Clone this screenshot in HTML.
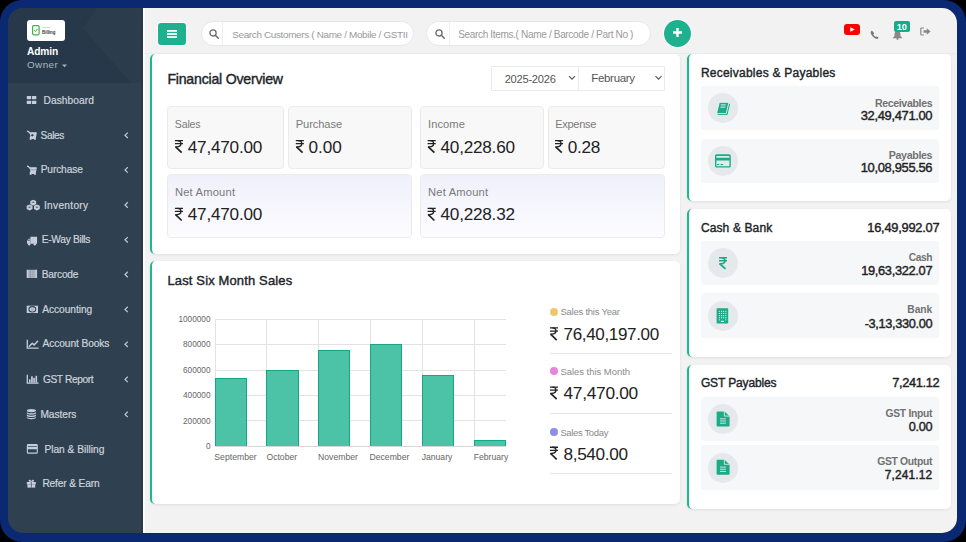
<!DOCTYPE html>
<html><head><meta charset="utf-8">
<style>
*{box-sizing:border-box;margin:0;padding:0}
html,body{width:966px;height:542px;overflow:hidden;background:#000;font-family:"Liberation Sans",sans-serif}
.frame{position:absolute;left:0;top:0;width:966px;height:542px;background:#0b2872;border-radius:22px}
.inner{position:absolute;left:0;top:0;width:966px;height:542px;clip-path:inset(8px 9px 9px 8px round 15px)}
.mainbg{position:absolute;left:143px;top:0;width:823px;height:542px;background:#f2f2f2}
.a{position:absolute}
.t{position:absolute;white-space:nowrap;line-height:1}
.side{position:absolute;left:0;top:0;width:143px;height:542px;background:#2f4050}
.prof{position:absolute;left:0;top:0;width:143px;height:83px;background:#27384a;overflow:hidden}
.sep{position:absolute;left:143px;top:0;width:1.5px;height:542px;background:#fbfbfb}
.card{position:absolute;background:#fff;border-radius:5px;box-shadow:0 1px 3px rgba(0,0,0,.08);border-left:2px solid #1db891}
.box{position:absolute;background:#f8f8f8;border:1px solid #ebebeb;border-radius:4px}
.net{background:linear-gradient(#f0f0fb,#fcfcff)}
.row{position:absolute;background:#f6f7f9;border-radius:3px;left:700.6px;width:238.6px}
.ic{position:absolute;left:708px;width:30px;height:30px;border-radius:50%;background:#e6e9ec}
.ic svg{position:absolute;left:0;top:0}
.srch{position:absolute;top:20.7px;height:25.5px;background:#fff;border:1px solid #e6e6e6;border-radius:13px}
.dd{position:absolute;top:65.5px;height:25px;background:#fff;border:1px solid #ebebeb}
.grid{position:absolute;background:#e3e3e3}
.bar{position:absolute;background:#4cc3a6;border:1.5px solid #13a783;border-bottom:none}
.rup{position:absolute}
.dot{position:absolute;width:8px;height:8px;border-radius:50%}
.hr{position:absolute;left:550px;width:122px;height:1px;background:#e6e6e6}
.chev{position:absolute}
</style></head><body>
<div class="frame"></div>
<div class="inner">
  <!-- sidebar -->
  <div class="mainbg"></div>
  <div class="side"></div>
  <div class="prof">
    <svg class="a" style="left:0;top:0" width="143" height="83"><polygon points="97,8 143,8 143,83 131,83 82.7,28.6" fill="#2b3c4d"/></svg>
  </div>
  <div class="sep"></div>
  <div class="a" style="left:141.3px;top:0;width:1.7px;height:542px;background:#283848"></div>
  <!-- logo -->
  <div class="a" style="left:27px;top:20px;width:38px;height:21px;background:#fff;border-radius:3px"></div>
  <svg class="a" style="left:32px;top:25px" width="30" height="11" viewBox="0 0 30 11">
    <rect x="0.6" y="0.6" width="6.5" height="9.2" rx="1.2" fill="none" stroke="#3bb34a" stroke-width="1.2"/>
    <path d="M2.2 5.2 L3.5 6.6 L5.6 3.8" fill="none" stroke="#3bb34a" stroke-width="1"/>
    <rect x="10.5" y="2.2" width="8" height="0.7" fill="#c8c8c8"/>
    <text x="10" y="8.6" font-family="Liberation Sans" font-size="4.9" font-weight="700" fill="#3a3a3a" textLength="13.5" lengthAdjust="spacingAndGlyphs">Billing</text>
  </svg>
  <svg class="a" style="left:62px;top:64px" width="6" height="4"><polygon points="0,0.5 5,0.5 2.5,3.3" fill="#a3b1bf"/></svg>
  <!-- sidebar icons -->
  <svg class="a" style="left:0;top:0" width="143" height="542" fill="#c6cedb">
    <!-- dashboard th-large -->
    <rect x="26.8" y="96" width="4.3" height="3.3" rx="0.5"/><rect x="31.9" y="96" width="4.4" height="3.3" rx="0.5"/>
    <rect x="26.8" y="100.8" width="4.3" height="3.3" rx="0.5"/><rect x="31.9" y="100.8" width="4.4" height="3.3" rx="0.5"/>
    <!-- sales cart-plus -->
    <path d="M27 131.2l1.6 0.4 0.8 1.2h6.8l-0.8 4.6h-5.2l0.3 1h5" fill="none" stroke="#c6cedb" stroke-width="1.2" stroke-linejoin="round"/>
    <path d="M29.6 132.8h6.6l-0.8 4.4h-5z M31.8 134.1v0.7h-1v0.9h1v0.7h1v-0.7h1v-0.9h-1v-0.7z" fill-rule="evenodd"/>
    <circle cx="30.6" cy="139" r="0.95"/><circle cx="35" cy="139" r="0.95"/>
    <!-- purchase cart -->
    <path d="M27 166.2l1.6 0.4 0.8 1.2h6.8l-0.8 4.6h-5.2l0.3 1h5" fill="none" stroke="#c6cedb" stroke-width="1.2" stroke-linejoin="round"/>
    <path d="M29.6 167.8h6.6l-0.8 4.4h-5z"/>
    <rect x="29.9" y="169.5" width="5.8" height="0.7" fill="#2f4050" opacity="0.5"/>
    <circle cx="30.6" cy="174" r="0.95"/><circle cx="35" cy="174" r="0.95"/>
    <!-- inventory cubes -->
    <path d="M33.2 199.8l2.9 1.2v3.3l-2.9 1.3-2.9-1.3v-3.3z"/>
    <path d="M29.6 204.6l2.9 1.2v3.3l-2.9 1.3-2.9-1.3v-3.3z"/>
    <path d="M36.9 204.6l2.9 1.2v3.3l-2.9 1.3-2.9-1.3v-3.3z"/>
    <g fill="#2f4050" opacity="0.75"><path d="M31.5 202.3l1.7 0.8 1.7-0.8-1.7-0.7z"/><path d="M27.9 207.1l1.7 0.8 1.7-0.8-1.7-0.7z"/><path d="M35.2 207.1l1.7 0.8 1.7-0.8-1.7-0.7z"/></g>
    <!-- truck (cab left) -->
    <path d="M30.4 236.8h6.7v7h-6.7z"/><path d="M30.4 238.8h-1.8l-1.6 2.2v2.8h3.4z"/>
    <path d="M28.3 239.6h1.5v1.5h-2.4z" fill="#2f4050" opacity="0.6"/>
    <circle cx="29.2" cy="244.2" r="1.2"/><circle cx="34.8" cy="244.2" r="1.2"/>
    <!-- barcode -->
    <rect x="26.7" y="269.8" width="10.4" height="8.2" fill="#a9b3c0"/><rect x="26.9" y="269.8" width="1.2" height="8.2" fill="#c9d1dc"/><rect x="35.4" y="269.8" width="1.6" height="8.2" fill="#c0c8d4"/><rect x="30" y="269.8" width="0.8" height="8.2" fill="#8b96a5"/><rect x="32.6" y="269.8" width="0.8" height="8.2" fill="#98a2b0"/>
    <!-- money -->
    <path d="M26.7 305.7h11.3v7.3h-11.3z"/><ellipse cx="32.35" cy="309.35" rx="3.4" ry="2.7" fill="none" stroke="#2f4050" stroke-width="1.1"/><ellipse cx="32.35" cy="309.35" rx="1.3" ry="2.2" fill="#aab4c2"/>
    <!-- chart line -->
    <path d="M27.3 339.7v8.5h11.3" fill="none" stroke="#c6cedb" stroke-width="1.3"/>
    <path d="M29.3 346.3l3-3 1.8 1.6 3.5-3.6" fill="none" stroke="#c6cedb" stroke-width="1.5" stroke-linejoin="round" stroke-linecap="round"/>
    <!-- chart bar -->
    <path d="M27.3 374.7v8.5h11.3" fill="none" stroke="#c6cedb" stroke-width="1.3"/>
    <rect x="29" y="379.3" width="1.5" height="3.3"/><rect x="31.1" y="376.3" width="1.7" height="6.3"/><rect x="33.3" y="377.8" width="1.6" height="4.8"/><rect x="35.5" y="375.8" width="1.6" height="6.8"/>
    <!-- database -->
    <ellipse cx="31.4" cy="410.6" rx="4.6" ry="1.6"/><path d="M26.8 411.9c0 1.8 9.2 1.8 9.2 0v1.4c0 1.8-9.2 1.8-9.2 0z"/><path d="M26.8 414.3c0 1.8 9.2 1.8 9.2 0v1.4c0 1.8-9.2 1.8-9.2 0z"/><path d="M26.8 416.7c0 1.8 9.2 1.8 9.2 0v0.8c0 2.2-9.2 2.2-9.2 0z"/>
    <!-- credit card -->
    <path d="M28.2 444h8.2a1.4 1.4 0 0 1 1.4 1.4v7a1.4 1.4 0 0 1-1.4 1.4h-8.2a1.4 1.4 0 0 1-1.4-1.4v-7a1.4 1.4 0 0 1 1.4-1.4z M27.9 445.9v0.9h8.8v-0.9z M27.9 449.2v3.4h8.8v-3.4z" fill-rule="evenodd"/>
    <!-- gift -->
    <rect x="26.8" y="482" width="9" height="2.4"/><rect x="27.4" y="484.4" width="7.8" height="3.2"/>
    <path d="M29.2 481.8c-1.6-1.8 0.6-3.2 2.1-0.8c1.5-2.4 3.7-1 2.1 0.8z"/>
    <rect x="30.9" y="482" width="0.8" height="5.6" fill="#2f4050" opacity="0.8"/>
  </svg>
  <!-- chevrons -->
  <svg class="a" style="left:0;top:0" width="143" height="542" fill="none" stroke="#c3ccd5" stroke-width="1.2">
    <path d="M127.8 132.6l-2.8 2.7 2.8 2.7"/>
    <path d="M127.8 167.2l-2.8 2.7 2.8 2.7"/>
    <path d="M127.8 202.3l-2.8 2.7 2.8 2.7"/>
    <path d="M127.8 237.1l-2.8 2.7 2.8 2.7"/>
    <path d="M127.8 271.8l-2.8 2.7 2.8 2.7"/>
    <path d="M127.8 306.7l-2.8 2.7 2.8 2.7"/>
    <path d="M127.8 341.6l-2.8 2.7 2.8 2.7"/>
    <path d="M127.8 376.7l-2.8 2.7 2.8 2.7"/>
    <path d="M127.8 411.7l-2.8 2.7 2.8 2.7"/>
  </svg>

  <!-- header -->
  <div class="a" style="left:144px;top:52.5px;width:822px;height:1px;background:#ebebeb"></div>
  <div class="a" style="left:157px;top:22px;width:30px;height:24px;background:#fff;border-radius:4px"></div>
  <div class="a" style="left:158px;top:23px;width:28px;height:22px;background:#1fb18f;border-radius:3px"></div>
  <svg class="a" style="left:167px;top:30px" width="10" height="8"><rect x="0" y="0" width="10" height="1.8" fill="#fff"/><rect x="0" y="3.1" width="10" height="1.8" fill="#fff"/><rect x="0" y="6.2" width="10" height="1.8" fill="#fff"/></svg>
  <div class="srch" style="left:201px;width:213px"></div>
  <div class="a" style="left:222px;top:22px;width:1px;height:23px;background:#efefef"></div>
  <div class="srch" style="left:426px;width:225px"></div>
  <div class="a" style="left:448.5px;top:22px;width:1px;height:23px;background:#efefef"></div>
  <svg class="a" style="left:208px;top:28px" width="13" height="13"><circle cx="5" cy="4.9" r="3.1" fill="none" stroke="#6a6a6a" stroke-width="1.3"/><path d="M7.3 7.2l3 3" stroke="#6a6a6a" stroke-width="1.5" stroke-linecap="round"/></svg>
  <svg class="a" style="left:433.5px;top:28px" width="13" height="13"><circle cx="5" cy="4.9" r="3.1" fill="none" stroke="#6a6a6a" stroke-width="1.3"/><path d="M7.3 7.2l3 3" stroke="#6a6a6a" stroke-width="1.5" stroke-linecap="round"/></svg>
  <div class="a" style="left:663px;top:19px;width:29px;height:29px;border-radius:50%;background:#fff"></div>
  <div class="a" style="left:664px;top:20px;width:27px;height:27px;border-radius:50%;background:#1fb18f"></div>
  <svg class="a" style="left:672px;top:27px" width="11" height="11"><path d="M5.5 1v9M1 5.5h9" stroke="#fff" stroke-width="2.4"/></svg>
  <!-- youtube -->
  <div class="a" style="left:844px;top:24px;width:16px;height:11px;background:#f00;border-radius:3px"></div>
  <svg class="a" style="left:849.5px;top:27px" width="6" height="6"><polygon points="0.3,0.2 4.8,2.5 0.3,4.8" fill="#fff"/></svg>
  <!-- phone -->
  <svg class="a" style="left:870px;top:29.5px" width="11" height="10"><path d="M1.6 0.8c-1.4 1-1.2 2.6 0.4 4.6c1.6 2 3.6 3.6 5.4 3.6l1.2-1.3-1.8-1.5-1 0.8c-0.9-0.5-2-1.6-2.5-2.6l0.9-0.9-1.3-2z" fill="#777"/></svg>
  <!-- bell -->
  <svg class="a" style="left:891.5px;top:30px" width="11" height="10"><path d="M5.5 1c-2 0-3 1.6-3 3.5v1.5l-2 2.2h10l-2-2.2v-1.5c0-1.9-1-3.5-3-3.5z" fill="#888"/><circle cx="5.5" cy="8.8" r="1.1" fill="#888"/></svg>
  <div class="a" style="left:893.5px;top:21px;width:16.5px;height:11.3px;background:#1aa98a;border-radius:2px"></div>
  <div class="t" style="left:896.8px;top:23.1px;font-size:9.2px;font-weight:700;color:#fff;letter-spacing:-0.1px">10</div>
  <!-- logout -->
  <svg class="a" style="left:920px;top:26.5px" width="12" height="9"><path d="M4 1H1.8a1 1 0 0 0-1 1v5a1 1 0 0 0 1 1H4" fill="none" stroke="#888" stroke-width="1.2"/><path d="M3.5 3.3h3.3V1.2l3.8 3.3-3.8 3.3V5.7H3.5z" fill="#888"/></svg>

  <!-- cards -->
  <div class="card" style="left:150px;top:54px;width:530px;height:200px"></div>
  <div class="card" style="left:150px;top:261px;width:530px;height:243px"></div>
  <div class="card" style="left:687.4px;top:54px;width:263.6px;height:147.4px"></div>
  <div class="card" style="left:687.4px;top:209px;width:263.6px;height:148px"></div>
  <div class="card" style="left:687.4px;top:364.5px;width:263.6px;height:144px"></div>

  <!-- dropdowns -->
  <div class="dd" style="left:491.3px;width:87.7px"></div>
  <div class="dd" style="left:578px;width:87px"></div>
  <svg class="a" style="left:567px;top:74px" width="100" height="8" fill="none" stroke="#555" stroke-width="1.1"><path d="M2 2.2l3 3 3-3"/><path d="M88.5 2.2l3 3 3-3"/></svg>

  <!-- financial boxes -->
  <div class="box" style="left:167px;top:106px;width:117.2px;height:63.4px"></div>
  <div class="box" style="left:288px;top:106px;width:124px;height:63.4px"></div>
  <div class="box" style="left:420px;top:106px;width:124.4px;height:63.4px"></div>
  <div class="box" style="left:547.5px;top:106px;width:117.3px;height:63.4px"></div>
  <div class="box net" style="left:167px;top:174px;width:245px;height:64px"></div>
  <div class="box net" style="left:420px;top:174px;width:244.8px;height:64px"></div>

  <!-- chart grid -->
  <div class="grid" style="left:214.8px;top:318.5px;width:291px;height:1px"></div>
  <div class="grid" style="left:214.8px;top:344px;width:291px;height:1px"></div>
  <div class="grid" style="left:214.8px;top:369.5px;width:291px;height:1px"></div>
  <div class="grid" style="left:214.8px;top:394.9px;width:291px;height:1px"></div>
  <div class="grid" style="left:214.8px;top:420.4px;width:291px;height:1px"></div>
  <div class="grid" style="left:214.8px;top:445.9px;width:291px;height:1px;background:#d6d6d6"></div>
  <div class="grid" style="left:214.5px;top:318.5px;width:1px;height:128px"></div>
  <div class="grid" style="left:266.4px;top:318.5px;width:1px;height:128px"></div>
  <div class="grid" style="left:318.2px;top:318.5px;width:1px;height:128px"></div>
  <div class="grid" style="left:370px;top:318.5px;width:1px;height:128px"></div>
  <div class="grid" style="left:422.2px;top:318.5px;width:1px;height:128px"></div>
  <div class="grid" style="left:474.1px;top:318.5px;width:1px;height:128px"></div>
  <div class="bar" style="left:214.5px;top:377.7px;width:32.3px;height:68.3px"></div>
  <div class="bar" style="left:266.3px;top:369.6px;width:32.3px;height:76.4px"></div>
  <div class="bar" style="left:318.2px;top:350.2px;width:32px;height:95.8px"></div>
  <div class="bar" style="left:370px;top:344px;width:32px;height:102px"></div>
  <div class="bar" style="left:422.3px;top:375.3px;width:31.6px;height:70.7px"></div>
  <div class="bar" style="left:474.2px;top:439.7px;width:31.4px;height:6.3px"></div>

  <!-- chart right panel -->
  <div class="dot" style="left:550px;top:307.6px;background:#f4c36e"></div>
  <div class="dot" style="left:550px;top:367.3px;background:#e884dc"></div>
  <div class="dot" style="left:550px;top:428px;background:#8f8ee6"></div>
  <div class="hr" style="top:353.3px"></div>
  <div class="hr" style="top:413.1px"></div>
  <div class="hr" style="top:472.5px"></div>

  <!-- right rows -->
  <div class="row" style="top:86px;height:44.4px"></div>
  <div class="row" style="top:139px;height:43.8px"></div>
  <div class="row" style="top:241.4px;height:43.9px"></div>
  <div class="row" style="top:293.4px;height:44.6px"></div>
  <div class="row" style="top:397.3px;height:43.9px"></div>
  <div class="row" style="top:445.3px;height:44.5px"></div>
  <div class="ic" style="top:93.3px"></div>
  <div class="ic" style="top:145.9px"></div>
  <div class="ic" style="top:248.3px"></div>
  <div class="ic" style="top:300.7px"></div>
  <div class="ic" style="top:404.3px"></div>
  <div class="ic" style="top:452.5px"></div>
  <svg class="a" style="left:0;top:0" width="966" height="542" fill="#1aab88">
    <!-- book -->
    <path d="M720.1 103.7H730.1L727.4 114.9H717.4Z"/>
    <path d="M719.3 102.3H728.9L726.3 113.6H716.5Z" stroke="#f3f4f6" stroke-width="0.9" stroke-linejoin="round"/>
    <rect x="720.8" y="104.4" width="5" height="1" fill="#e6e9ec"/><rect x="720.4" y="106.6" width="5" height="1" fill="#e6e9ec"/>
    <!-- credit card -->
    <path d="M716.6 154.3h12.6a1.6 1.6 0 0 1 1.6 1.6v10.1a1.6 1.6 0 0 1-1.6 1.6h-12.6a1.6 1.6 0 0 1-1.6-1.6v-10.1a1.6 1.6 0 0 1 1.6-1.6z M716.4 155.9v1.8h13v-1.8z M716.4 160.4v5.8h13v-5.8z" fill-rule="evenodd"/>
    <rect x="717" y="164" width="2.2" height="1.1"/><rect x="720.5" y="164" width="2.6" height="1.1"/>
    <!-- building -->
    <rect x="716.6" y="308.3" width="11.6" height="15.3" rx="0.8"/>
    <g fill="#e6e9ec">
    <rect x="718.8" y="310.8" width="1.1" height="1.1"/><rect x="721" y="310.8" width="1.1" height="1.1"/><rect x="723.1" y="310.8" width="1.1" height="1.1"/><rect x="725.3" y="310.8" width="1.1" height="1.1"/>
    <rect x="718.8" y="312.9" width="1.1" height="1.1"/><rect x="721" y="312.9" width="1.1" height="1.1"/><rect x="723.1" y="312.9" width="1.1" height="1.1"/><rect x="725.3" y="312.9" width="1.1" height="1.1"/>
    <rect x="718.8" y="315.1" width="1.1" height="1.1"/><rect x="721" y="315.1" width="1.1" height="1.1"/><rect x="723.1" y="315.1" width="1.1" height="1.1"/><rect x="725.3" y="315.1" width="1.1" height="1.1"/>
    <rect x="718.8" y="317.2" width="1.1" height="1.1"/><rect x="721" y="317.2" width="1.1" height="1.1"/><rect x="723.1" y="317.2" width="1.1" height="1.1"/><rect x="725.3" y="317.2" width="1.1" height="1.1"/>
    <rect x="718.8" y="319.3" width="1.1" height="1.1"/><rect x="725.3" y="319.3" width="1.1" height="1.1"/>
    <rect x="720.9" y="320.8" width="3.2" height="1.3" rx="0.6" fill="#fff"/>
    </g>
    <!-- file-alt x2 -->
    <path d="M717.6 411.6h6.9l5.1 4.6v9.4a1 1 0 0 1-1 1h-11a1 1 0 0 1-1-1v-13a1 1 0 0 1 1-1z"/>
    <path d="M724.3 411.2v4.9h5.5" fill="none" stroke="#f3f4f6" stroke-width="0.8"/>
    <g fill="#e6e9ec"><rect x="720" y="418.4" width="5.9" height="0.9"/><rect x="720" y="420.5" width="5.9" height="0.9"/><rect x="720" y="422.7" width="5.9" height="0.9"/></g>
    <path d="M717.6 459.8h6.9l5.1 4.6v9.4a1 1 0 0 1-1 1h-11a1 1 0 0 1-1-1v-13a1 1 0 0 1 1-1z"/>
    <path d="M724.3 459.4v4.9h5.5" fill="none" stroke="#f3f4f6" stroke-width="0.8"/>
    <g fill="#e6e9ec"><rect x="720" y="466.6" width="5.9" height="0.9"/><rect x="720" y="468.7" width="5.9" height="0.9"/><rect x="720" y="470.9" width="5.9" height="0.9"/></g>
  </svg>
  <!-- rupee symbols -->
  <svg class="a" style="left:0;top:0" width="966" height="542" fill="none" stroke="#222">
    <defs><g id="rs"><path d="M0 0.65H8.1M0 3.75H8.1" stroke-width="1.3"/><path d="M2.5 0.65C5.2 0.65 6 2.3 6 3.75C6 5.6 4.5 6.9 1.8 6.9H0.3" stroke-width="1.35"/><path d="M0.7 6.9L6.8 12.8" stroke-width="1.7"/></g></defs>
    <use href="#rs" x="174.9" y="139.9"/><use href="#rs" x="295.8" y="139.9"/><use href="#rs" x="427.6" y="139.9"/><use href="#rs" x="555" y="139.9"/>
    <use href="#rs" x="174.9" y="207.7"/><use href="#rs" x="427.6" y="207.7"/>
    <use href="#rs" x="549.9" y="327.3"/><use href="#rs" x="549.9" y="386.4"/><use href="#rs" x="549.9" y="446.6"/>
  </svg>
  <svg class="a" style="left:718px;top:256px" width="11" height="14" fill="none" stroke="#1aab88"><path d="M1 1.8H9M1 4.7H9" stroke-width="1.6"/><path d="M3.5 1.8C6 1.8 6.9 3.2 6.9 4.7C6.9 6.6 5.4 7.7 3.2 7.7H1.3" stroke-width="1.6"/><path d="M1.8 7.7L7.5 12.9" stroke-width="1.9"/></svg>

<div class="t" id="t0" style="top:46.57px;font-size:10.196px;color:#ffffff;font-weight:700;letter-spacing:-0.125px;left:27.00px;">Admin</div>
<div class="t" id="t1" style="top:60.41px;font-size:9.916px;color:#a9b6c4;font-weight:400;letter-spacing:0.400px;left:27.00px;">Owner</div>
<div class="t" id="t2" style="top:95.67px;font-size:10.196px;color:#cdd4dc;font-weight:400;letter-spacing:0.062px;-webkit-text-stroke:0.2px currentColor;left:43.50px;">Dashboard</div>
<div class="t" id="t3" style="top:130.67px;font-size:10.196px;color:#cdd4dc;font-weight:400;letter-spacing:-0.425px;-webkit-text-stroke:0.2px currentColor;left:40.60px;">Sales</div>
<div class="t" id="t4" style="top:165.17px;font-size:10.196px;color:#cdd4dc;font-weight:400;letter-spacing:-0.129px;-webkit-text-stroke:0.2px currentColor;left:40.70px;">Purchase</div>
<div class="t" id="t5" style="top:200.67px;font-size:10.196px;color:#cdd4dc;font-weight:400;letter-spacing:0.275px;-webkit-text-stroke:0.2px currentColor;left:44.00px;">Inventory</div>
<div class="t" id="t6" style="top:235.37px;font-size:10.196px;color:#cdd4dc;font-weight:400;letter-spacing:-0.310px;-webkit-text-stroke:0.2px currentColor;left:41.80px;">E-Way Bills</div>
<div class="t" id="t7" style="top:269.67px;font-size:10.196px;color:#cdd4dc;font-weight:400;letter-spacing:-0.217px;-webkit-text-stroke:0.2px currentColor;left:41.80px;">Barcode</div>
<div class="t" id="t8" style="top:304.67px;font-size:10.196px;color:#cdd4dc;font-weight:400;letter-spacing:-0.044px;-webkit-text-stroke:0.2px currentColor;left:42.20px;">Accounting</div>
<div class="t" id="t9" style="top:339.37px;font-size:10.196px;color:#cdd4dc;font-weight:400;letter-spacing:-0.083px;-webkit-text-stroke:0.2px currentColor;left:42.50px;">Account Books</div>
<div class="t" id="t10" style="top:374.87px;font-size:10.196px;color:#cdd4dc;font-weight:400;letter-spacing:-0.389px;-webkit-text-stroke:0.2px currentColor;left:42.90px;">GST Report</div>
<div class="t" id="t11" style="top:409.67px;font-size:10.196px;color:#cdd4dc;font-weight:400;letter-spacing:-0.033px;-webkit-text-stroke:0.2px currentColor;left:40.40px;">Masters</div>
<div class="t" id="t12" style="top:444.57px;font-size:10.196px;color:#cdd4dc;font-weight:400;-webkit-text-stroke:0.2px currentColor;left:44.40px;">Plan &amp; Billing</div>
<div class="t" id="t13" style="top:479.37px;font-size:10.196px;color:#cdd4dc;font-weight:400;letter-spacing:-0.145px;-webkit-text-stroke:0.2px currentColor;left:42.40px;">Refer &amp; Earn</div>
<div class="t" id="t14" style="top:30.08px;font-size:9.941px;color:#9a9a9a;font-weight:400;letter-spacing:-0.350px;left:232.20px;">Search Customers ( Name / Mobile / GSTII</div>
<div class="t" id="t15" style="top:29.99px;font-size:10.059px;color:#9a9a9a;font-weight:400;letter-spacing:-0.350px;left:458.20px;">Search Items.( Name / Barcode / Part No )</div>
<div class="t" id="t16" style="top:72.16px;font-size:14.106px;color:#212529;font-weight:400;-webkit-text-stroke:0.4px currentColor;letter-spacing:-0.200px;left:167.40px;">Financial Overview</div>
<div class="t" id="t17" style="top:73.58px;font-size:11.126px;color:#555;font-weight:400;letter-spacing:-0.250px;left:504.70px;">2025-2026</div>
<div class="t" id="t18" style="top:73.27px;font-size:11.490px;color:#555;font-weight:400;letter-spacing:-0.321px;left:591.30px;">February</div>
<div class="t" id="t19" style="top:119.45px;font-size:10.575px;color:#7a7a7a;font-weight:400;letter-spacing:-0.150px;left:174.80px;">Sales</div>
<div class="t" id="t20" style="top:118.94px;font-size:11.173px;color:#7a7a7a;font-weight:400;letter-spacing:-0.100px;left:295.70px;">Purchase</div>
<div class="t" id="t21" style="top:118.94px;font-size:11.173px;color:#7a7a7a;font-weight:400;letter-spacing:0.060px;left:428.00px;">Income</div>
<div class="t" id="t22" style="top:119.01px;font-size:11.095px;color:#7a7a7a;font-weight:400;letter-spacing:-0.350px;left:555.30px;">Expense</div>
<div class="t" id="t23" style="top:138.76px;font-size:17.179px;color:#222;font-weight:400;letter-spacing:-0.225px;left:187.80px;">47,470.00</div>
<div class="t" id="t24" style="top:138.76px;font-size:17.179px;color:#222;font-weight:400;left:308.50px;">0.00</div>
<div class="t" id="t25" style="top:138.76px;font-size:17.179px;color:#222;font-weight:400;letter-spacing:-0.225px;left:440.50px;">40,228.60</div>
<div class="t" id="t26" style="top:138.76px;font-size:17.179px;color:#222;font-weight:400;letter-spacing:-0.333px;left:567.80px;">0.28</div>
<div class="t" id="t27" style="top:186.94px;font-size:11.173px;color:#7a7a7a;font-weight:400;letter-spacing:0.200px;left:174.90px;">Net Amount</div>
<div class="t" id="t28" style="top:186.94px;font-size:11.173px;color:#7a7a7a;font-weight:400;letter-spacing:0.200px;left:428.00px;">Net Amount</div>
<div class="t" id="t29" style="top:206.16px;font-size:17.179px;color:#222;font-weight:400;letter-spacing:-0.225px;left:187.80px;">47,470.00</div>
<div class="t" id="t30" style="top:206.16px;font-size:17.179px;color:#222;font-weight:400;letter-spacing:-0.225px;left:440.50px;">40,228.32</div>
<div class="t" id="t31" style="top:274.30px;font-size:12.989px;color:#212529;font-weight:400;-webkit-text-stroke:0.4px currentColor;letter-spacing:0.147px;left:167.50px;">Last Six Month Sales</div>
<div class="t" id="t32" style="top:315.62px;font-size:8.240px;color:#666;font-weight:400;right:755.50px;">1000000</div>
<div class="t" id="t33" style="top:341.10px;font-size:8.240px;color:#666;font-weight:400;right:755.50px;">800000</div>
<div class="t" id="t34" style="top:366.58px;font-size:8.240px;color:#666;font-weight:400;right:755.50px;">600000</div>
<div class="t" id="t35" style="top:392.06px;font-size:8.240px;color:#666;font-weight:400;right:755.50px;">400000</div>
<div class="t" id="t36" style="top:417.54px;font-size:8.240px;color:#666;font-weight:400;right:755.50px;">200000</div>
<div class="t" id="t37" style="top:443.02px;font-size:8.240px;color:#666;font-weight:400;right:755.50px;">0</div>
<div class="t" id="t38" style="top:453.07px;font-size:8.659px;color:#666;font-weight:400;left:235.50px;transform:translateX(-50%);">September</div>
<div class="t" id="t39" style="top:453.07px;font-size:8.659px;color:#666;font-weight:400;left:281.80px;transform:translateX(-50%);">October</div>
<div class="t" id="t40" style="top:453.07px;font-size:8.659px;color:#666;font-weight:400;left:338.00px;transform:translateX(-50%);">November</div>
<div class="t" id="t41" style="top:453.07px;font-size:8.659px;color:#666;font-weight:400;left:389.40px;transform:translateX(-50%);">December</div>
<div class="t" id="t42" style="top:453.07px;font-size:8.659px;color:#666;font-weight:400;left:437.00px;transform:translateX(-50%);">January</div>
<div class="t" id="t43" style="top:453.07px;font-size:8.659px;color:#666;font-weight:400;left:491.00px;transform:translateX(-50%);">February</div>
<div class="t" id="t44" style="top:307.26px;font-size:9.497px;color:#8a8a8a;font-weight:400;letter-spacing:-0.229px;left:560.40px;">Sales this Year</div>
<div class="t" id="t45" style="top:366.96px;font-size:9.497px;color:#8a8a8a;font-weight:400;letter-spacing:-0.033px;left:560.40px;">Sales this Month</div>
<div class="t" id="t46" style="top:427.56px;font-size:9.497px;color:#8a8a8a;font-weight:400;letter-spacing:-0.350px;left:560.40px;">Sales Today</div>
<div class="t" id="t47" style="top:326.36px;font-size:17.054px;color:#222;font-weight:400;letter-spacing:-0.350px;left:563.50px;">76,40,197.00</div>
<div class="t" id="t48" style="top:385.24px;font-size:17.324px;color:#222;font-weight:400;letter-spacing:-0.287px;left:563.50px;">47,470.00</div>
<div class="t" id="t49" style="top:445.54px;font-size:17.197px;color:#222;font-weight:400;letter-spacing:-0.350px;left:563.50px;">8,540.00</div>
<div class="t" id="t50" style="top:66.73px;font-size:12.011px;color:#212529;font-weight:400;-webkit-text-stroke:0.4px currentColor;letter-spacing:0.238px;left:700.90px;">Receivables &amp; Payables</div>
<div class="t" id="t51" style="top:98.03px;font-size:10.596px;color:#717171;font-weight:700;letter-spacing:-0.350px;right:33.80px;">Receivables</div>
<div class="t" id="t52" style="top:110.23px;font-size:12.963px;color:#222;font-weight:400;-webkit-text-stroke:0.4px currentColor;letter-spacing:-0.350px;right:33.80px;">32,49,471.00</div>
<div class="t" id="t53" style="top:150.17px;font-size:10.670px;color:#717171;font-weight:700;letter-spacing:-0.350px;right:33.80px;">Payables</div>
<div class="t" id="t54" style="top:162.43px;font-size:12.963px;color:#222;font-weight:400;-webkit-text-stroke:0.4px currentColor;letter-spacing:-0.350px;right:33.80px;">10,08,955.56</div>
<div class="t" id="t55" style="top:222.23px;font-size:12.011px;color:#212529;font-weight:400;-webkit-text-stroke:0.4px currentColor;letter-spacing:0.130px;left:700.90px;">Cash &amp; Bank</div>
<div class="t" id="t56" style="top:221.50px;font-size:12.876px;color:#222;font-weight:400;-webkit-text-stroke:0.4px currentColor;letter-spacing:-0.259px;right:26.70px;">16,49,992.07</div>
<div class="t" id="t57" style="top:252.76px;font-size:10.206px;color:#717171;font-weight:700;letter-spacing:-0.350px;right:33.80px;">Cash</div>
<div class="t" id="t58" style="top:264.71px;font-size:12.859px;color:#222;font-weight:400;-webkit-text-stroke:0.4px currentColor;letter-spacing:-0.332px;right:33.80px;">19,63,322.07</div>
<div class="t" id="t59" style="top:305.25px;font-size:10.222px;color:#717171;font-weight:700;letter-spacing:-0.017px;right:33.80px;">Bank</div>
<div class="t" id="t60" style="top:317.58px;font-size:12.784px;color:#222;font-weight:400;-webkit-text-stroke:0.4px currentColor;letter-spacing:-0.350px;right:33.80px;">-3,13,330.00</div>
<div class="t" id="t61" style="top:377.23px;font-size:12.011px;color:#212529;font-weight:400;-webkit-text-stroke:0.4px currentColor;letter-spacing:-0.136px;left:700.90px;">GST Payables</div>
<div class="t" id="t62" style="top:376.53px;font-size:12.846px;color:#222;font-weight:400;-webkit-text-stroke:0.4px currentColor;letter-spacing:-0.350px;right:26.70px;">7,241.12</div>
<div class="t" id="t63" style="top:408.67px;font-size:10.314px;color:#717171;font-weight:700;letter-spacing:-0.275px;right:33.80px;">GST Input</div>
<div class="t" id="t64" style="top:420.55px;font-size:12.703px;color:#222;font-weight:400;-webkit-text-stroke:0.4px currentColor;letter-spacing:-0.283px;right:33.80px;">0.00</div>
<div class="t" id="t65" style="top:456.92px;font-size:10.377px;color:#717171;font-weight:700;letter-spacing:-0.306px;right:33.80px;">GST Output</div>
<div class="t" id="t66" style="top:469.82px;font-size:11.903px;color:#222;font-weight:400;-webkit-text-stroke:0.4px currentColor;letter-spacing:0.150px;right:33.80px;">7,241.12</div>
</div>
</body></html>
